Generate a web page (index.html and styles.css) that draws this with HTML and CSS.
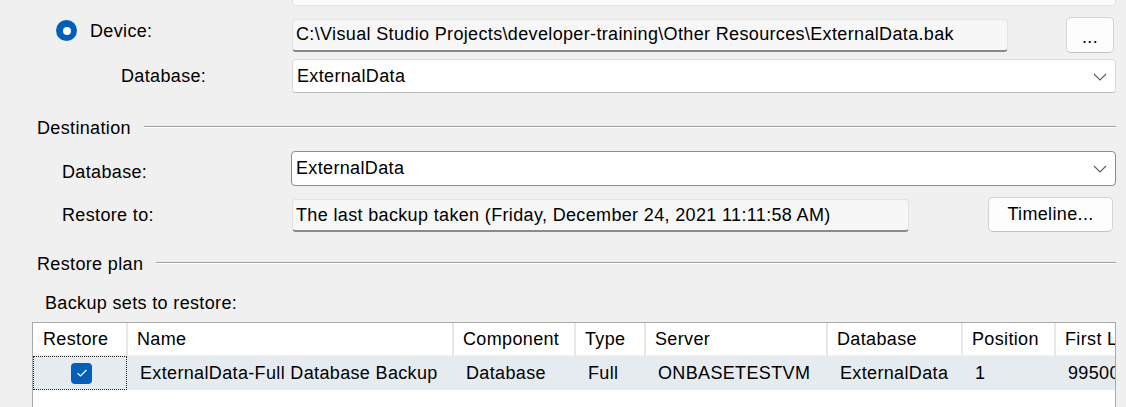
FILE: index.html
```html
<!DOCTYPE html>
<html>
<head>
<meta charset="utf-8">
<link rel="stylesheet" href="styles.css">
</head>
<body>
<div class="dialog">
  <div class="stub"></div>

  <div class="row row-device">
    <div class="radio-group">
      <span class="radio"><span class="radio-dot"></span></span>
      <span class="label">Device:</span>
    </div>
    <div class="field field-device">C:\Visual Studio Projects\developer-training\Other Resources\ExternalData.bak</div>
    <button class="btn btn-browse">...</button>
  </div>

  <div class="row row-srcdb">
    <span class="label label-srcdb">Database:</span>
    <div class="combo combo-src"><span>ExternalData</span><svg class="chev" width="14" height="8" viewBox="0 0 14 8"><path d="M1 1 L7 7 L13 1" fill="none" stroke="#606060" stroke-width="1.2"/></svg></div>
  </div>

  <div class="group-head group-dest"><span>Destination</span></div>

  <div class="row row-destdb">
    <span class="label label-dest">Database:</span>
    <div class="combo combo-dest"><span>ExternalData</span><svg class="chev" width="14" height="8" viewBox="0 0 14 8"><path d="M1 1 L7 7 L13 1" fill="none" stroke="#606060" stroke-width="1.2"/></svg></div>
  </div>

  <div class="row row-restoreto">
    <span class="label label-dest">Restore to:</span>
    <div class="field field-restoreto">The last backup taken (Friday, December 24, 2021 11:11:58 AM)</div>
    <button class="btn btn-timeline">Timeline...</button>
  </div>

  <div class="group-head group-plan"><span>Restore plan</span></div>

  <div class="sets-label">Backup sets to restore:</div>

  <div class="grid">
    <table class="sets">
      <colgroup>
        <col class="c-restore"><col class="c-name"><col class="c-comp"><col class="c-type"><col class="c-server"><col class="c-db"><col class="c-pos"><col class="c-first">
      </colgroup>
      <thead>
        <tr>
          <th class="h-restore">Restore</th>
          <th>Name</th>
          <th>Component</th>
          <th>Type</th>
          <th>Server</th>
          <th>Database</th>
          <th>Position</th>
          <th>First LSN</th>
        </tr>
      </thead>
      <tbody>
        <tr class="sel">
          <td class="cell-check"><span class="focus"><span class="check"><svg width="12" height="10" viewBox="0 0 12 10"><path d="M1.5 5.2 L4.5 8 L10.5 2" fill="none" stroke="#ffffff" stroke-width="1.2"/></svg></span></span></td>
          <td>ExternalData-Full Database Backup</td>
          <td>Database</td>
          <td>Full</td>
          <td>ONBASETESTVM</td>
          <td>ExternalData</td>
          <td>1</td>
          <td>99500000012345</td>
        </tr>
      </tbody>
    </table>
  </div>
</div>
</body>
</html>
```

FILE: styles.css
```css
html, body {
  margin: 0;
  padding: 0;
  background: #f0f0f0;
  overflow: hidden;
}

body {
  font-family: "Liberation Sans", Arial, sans-serif;
  font-size: 18px;
  letter-spacing: 0.35px;
  color: #000;
}

.dialog {
  width: 1126px;
  height: 407px;
  overflow: hidden;
}

.stub {
  margin-left: 292px;
  width: 822px;
  height: 5px;
  background: #fbfbfb;
  border: 1px solid #e2e2e2;
  border-top: none;
  border-radius: 0 0 4px 4px;
}

.row {
  display: flex;
  align-items: center;
}

.label {
  line-height: 20px;
  white-space: nowrap;
}

.row-device {
  margin-top: 11px;
  height: 36px;
}

.radio-group {
  display: flex;
  align-items: center;
  width: 292px;
  padding-left: 56px;
  box-sizing: border-box;
  align-self: flex-start;
  margin-top: 3px;
  height: 21px;
}

.radio {
  width: 21px;
  height: 21px;
  border-radius: 50%;
  background: #005fb8;
  display: flex;
  align-items: center;
  justify-content: center;
  margin-right: 13px;
}

.radio-dot {
  width: 8px;
  height: 8px;
  border-radius: 50%;
  background: #fff;
}

.field {
  height: 33px;
  box-sizing: border-box;
  background: #f7f7f7;
  border: 1px solid #e3e3e3;
  border-bottom: 2px solid #8a8a8a;
  border-radius: 4px;
  padding: 0 3px;
  display: flex;
  align-items: center;
  white-space: nowrap;
  overflow: hidden;
}

.field-device {
  width: 716px;
}

.btn {
  font-family: inherit;
  font-size: 18px;
  letter-spacing: 0.35px;
  color: #000;
  background: #fdfdfd;
  border: 1px solid #d3d3d3;
  border-bottom-color: #c2c2c2;
  border-radius: 5px;
  padding: 0;
  height: 36px;
}

.btn-browse {
  width: 48px;
  margin-left: 58px;
  line-height: 20px;
  padding-top: 4px;
}

.row-srcdb {
  margin-top: 6px;
  height: 34px;
}

.label-srcdb {
  width: 171px;
  margin-left: 121px;
}

.combo {
  height: 34px;
  width: 824px;
  box-sizing: border-box;
  background: #fff;
  border: 1px solid #dcdcdc;
  border-bottom-color: #bdbdbd;
  border-radius: 4px;
  display: flex;
  align-items: center;
  padding: 0 8px 0 4px;
  justify-content: space-between;
}

.combo-dest {
  height: 35px;
  width: 825px;
  border-color: #8c8c8c;
}

.chev {
  display: block;
  margin-top: 1px;
}

.group-head {
  display: flex;
  align-items: center;
  height: 18px;
  padding-left: 37px;
  width: 1116px;
  box-sizing: border-box;
  line-height: 18px;
}

.group-head::after {
  content: "";
  flex: 1;
  height: 0;
  border-top: 1px solid #a0a0a0;
  border-bottom: 1px solid #ffffff;
  margin-left: 13px;
  margin-top: -2px;
}

.group-dest {
  margin-top: 26px;
}

.row-destdb {
  margin-top: 14px;
  height: 35px;
}

.row-destdb .label-dest {
  margin-top: 6px;
}

.label-dest {
  width: 229px;
  margin-left: 62px;
}

.row-restoreto {
  margin-top: 11px;
  height: 35px;
}

.field-restoreto {
  width: 617px;
  margin-left: 1px;
  margin-top: 2px;
}

.btn-timeline {
  width: 125px;
  height: 35px;
  margin-left: 79px;
}

.group-plan {
  margin-top: 23px;
}

.sets-label {
  margin-top: 21px;
  margin-left: 45px;
  line-height: 18px;
  height: 18px;
}

.grid {
  margin-top: 10px;
  margin-left: 32px;
  width: 1084px;
  height: 120px;
  box-sizing: border-box;
  background: #fff;
  border: 1px solid #a8a8a8;
  overflow: hidden;
}

.sets {
  border-collapse: collapse;
  table-layout: fixed;
  width: 1200px;
}

.c-restore { width: 94px; }
.c-name { width: 326px; }
.c-comp { width: 122px; }
.c-type { width: 70px; }
.c-server { width: 182px; }
.c-db { width: 135px; }
.c-pos { width: 93px; }
.c-first { width: 178px; }

.sets th {
  font-weight: normal;
  text-align: left;
  height: 32px;
  padding: 0 0 0 9px;
  border-right: 2px solid #e8e8e8;
  border-bottom: 1px solid #f0f0f0;
  white-space: nowrap;
  overflow: hidden;
}

.sets th.h-restore {
  padding-left: 10px;
}

.sets td {
  height: 34px;
  padding: 0 0 0 13px;
  background: #e6ebf0;
  white-space: nowrap;
  overflow: hidden;
}

.sets td.cell-check {
  padding: 0;
}

.focus {
  display: flex;
  align-items: center;
  justify-content: center;
  height: 34px;
  box-sizing: border-box;
  border: 1px dotted #202020;
}

.check {
  width: 21px;
  height: 21px;
  border-radius: 4px;
  background: #005fb8;
  display: flex;
  align-items: center;
  justify-content: center;
  margin-left: 3px;
}

.check svg {
  display: block;
}
```
